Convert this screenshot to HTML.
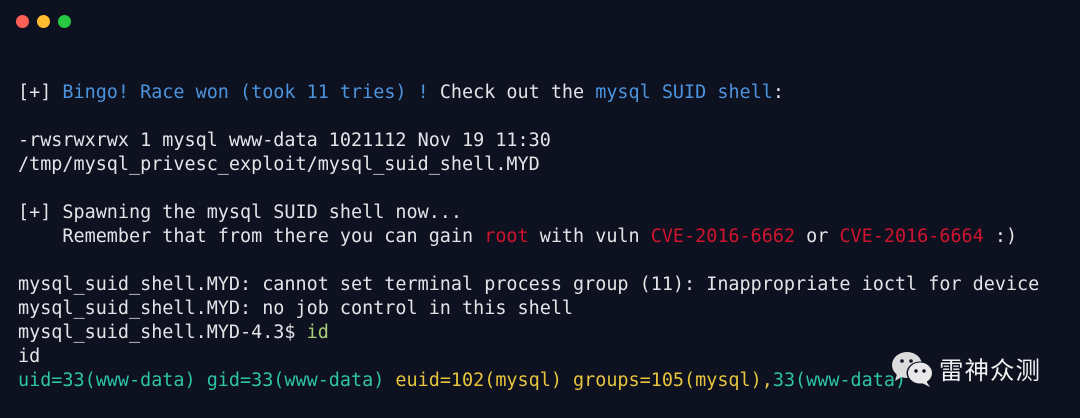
<!DOCTYPE html>
<html><head><meta charset="utf-8"><style>
html,body{margin:0;padding:0}
body{width:1080px;height:418px;background:#0d1120;overflow:hidden;position:relative;font-family:"DejaVu Sans Mono","Liberation Mono",monospace;}
.dot{position:absolute;top:15px;width:13px;height:13px;border-radius:50%}
pre{position:absolute;left:18px;top:81px;margin:0;font-family:"DejaVu Sans Mono","Liberation Mono",monospace;font-size:18.45px;line-height:24px;color:#e4e4e8;white-space:pre}
.b{color:#4d94de}.r{color:#d0142e}.g{color:#a8cf78}.t{color:#2ec4a6}.y{color:#e8c43c}
.wm{position:absolute;left:891px;top:350px;display:flex;align-items:center}
.wm span{font-family:"Noto Sans CJK SC",sans-serif;font-size:24.5px;color:#f2f2f2;margin-left:4px;letter-spacing:1px}
</style></head><body>
<div class="dot" style="left:16px;background:#fe5f57"></div>
<div class="dot" style="left:37px;background:#febc2e"></div>
<div class="dot" style="left:58px;background:#28c840"></div>
<pre>[+] <span class="b">Bingo! Race won (took 11 tries) !</span> Check out the <span class="b">mysql SUID shell</span>:

-rwsrwxrwx 1 mysql www-data 1021112 Nov 19 11:30
/tmp/mysql_privesc_exploit/mysql_suid_shell.MYD

[+] Spawning the mysql SUID shell now...
    Remember that from there you can gain <span class="r">root</span> with vuln <span class="r">CVE-2016-6662</span> or <span class="r">CVE-2016-6664</span> :)

mysql_suid_shell.MYD: cannot set terminal process group (11): Inappropriate ioctl for device
mysql_suid_shell.MYD: no job control in this shell
mysql_suid_shell.MYD-4.3$ <span class="g">id</span>
id
<span class="t">uid=33(www-data) gid=33(www-data)</span> <span class="y">euid=102(mysql) groups=105(mysql),</span><span class="t">33(www-data)</span></pre>
<div class="wm">
<svg width="44" height="38" viewBox="0 0 44 38">
<ellipse cx="16" cy="15" rx="15" ry="13" fill="#dcdcdc"/>
<path d="M6 24 L4 31 L12 26 Z" fill="#dcdcdc"/>
<circle cx="11" cy="11" r="1.8" fill="#0d1120"/><circle cx="20" cy="11" r="1.8" fill="#0d1120"/>
<ellipse cx="29" cy="23" rx="13.5" ry="11.5" fill="#0d1120"/>
<ellipse cx="29" cy="23" rx="12" ry="10.5" fill="#e8e8e8"/>
<path d="M35 31 L39 37 L31 33 Z" fill="#e8e8e8"/>
<circle cx="25" cy="21" r="1.7" fill="#0d1120"/><circle cx="33" cy="21" r="1.7" fill="#0d1120"/>
</svg>
<span>雷神众测</span>
</div>
</body></html>
